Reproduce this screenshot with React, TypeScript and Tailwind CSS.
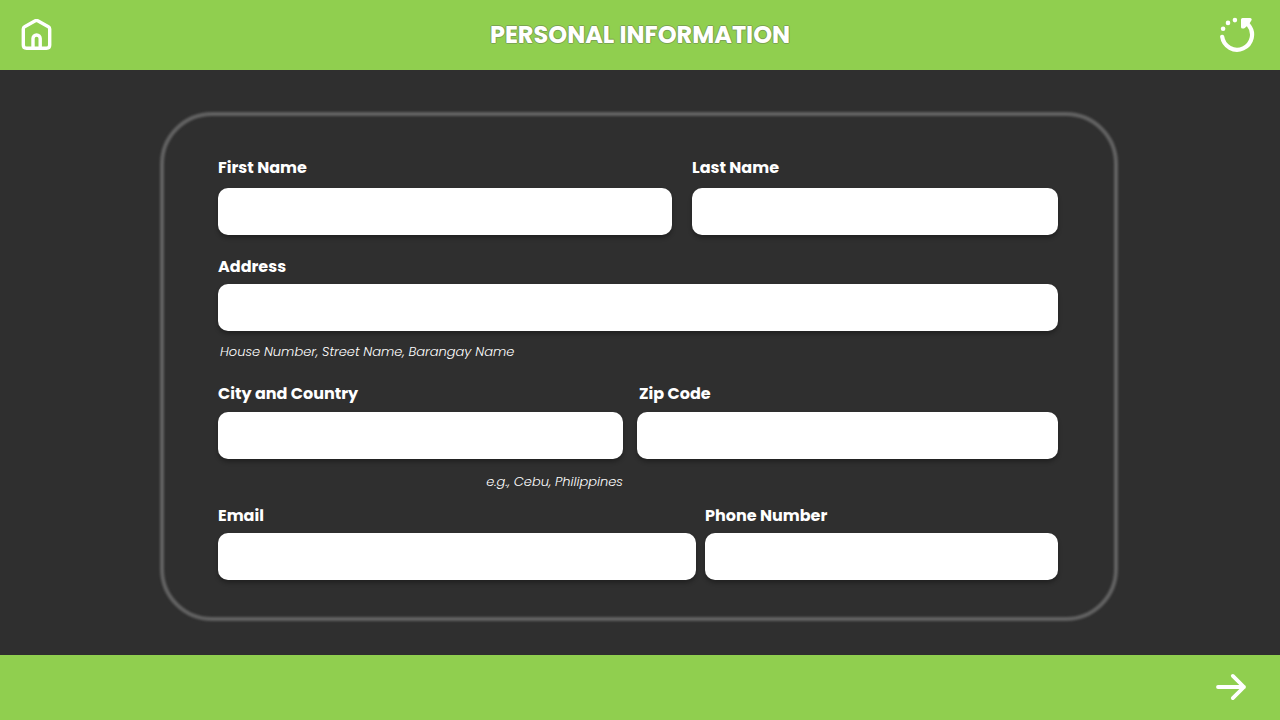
import type { ReactNode } from "react";

type FieldProps = {
  id: string;
  label: string;
  type?: string;
  hint?: string;
  gap?: string;
  labelClass?: string;
  hintClass?: string;
};

function Field({ id, label, type = "text", hint, gap = "gap-[5px]", labelClass = "", hintClass = "" }: FieldProps) {
  return (
    <div className="flex min-w-0 flex-col">
      <div className={`flex flex-col ${gap}`}>
        <label htmlFor={id} className={`text-base leading-6 font-bold ${labelClass}`}>
          {label}
        </label>
        <input
          id={id}
          type={type}
          aria-describedby={hint ? `${id}-hint` : undefined}
          className="h-[47px] w-full rounded-[10px] bg-white px-4 text-base text-neutral-800 shadow-[0_3px_4px_rgba(0,0,0,0.3)] outline-none focus:ring-2 focus:ring-[#90cf4f]"
        />
      </div>
      {hint && (
        <p id={`${id}-hint`} className={`text-[13px] leading-5 font-light italic ${hintClass}`}>
          {hint}
        </p>
      )}
    </div>
  );
}

function IconButton({ label, className = "", children }: { label: string; className?: string; children: ReactNode }) {
  return (
    <button type="button" aria-label={label} className={`shrink-0 cursor-pointer text-white ${className}`}>
      {children}
    </button>
  );
}

function HomeIcon() {
  return (
    <svg width="32" height="32" viewBox="0 0 32 32" fill="none" stroke="currentColor" strokeWidth="3.4" strokeLinejoin="round">
      <path d="M2.3 10Q2.3 8.4 3.6 7.7L14.3 1.8Q15.5 1.2 16.7 1.8L27.4 7.7Q28.7 8.4 28.7 10V26Q28.7 29.2 25.5 29.2H5.5Q2.3 29.2 2.3 26Z" />
      <path d="M12 29V19.6a3.6 3.6 0 0 1 7.2 0V29" />
    </svg>
  );
}

function ResetIcon() {
  return (
    <svg width="36" height="36" viewBox="0 0 36 36" fill="none" stroke="currentColor" strokeLinecap="round" strokeLinejoin="round">
      <path d="M3.2 19.8A15 15 0 1 0 29.5 8" strokeWidth="4.2" />
      <path d="M23.5 2.4h7.7l-2 3.4-4.4 4.2h-1.3Z" fill="currentColor" strokeWidth="3" />
      <g fill="currentColor" stroke="none">
        <circle cx="4.1" cy="11.8" r="2.3" />
        <circle cx="9" cy="5.9" r="2.3" />
        <circle cx="15.9" cy="3.1" r="2.3" />
      </g>
    </svg>
  );
}

function NextIcon() {
  return (
    <svg width="32" height="32" viewBox="0 0 32 32" fill="none" stroke="currentColor" strokeWidth="3.8" strokeLinecap="round" strokeLinejoin="round">
      <path d="M3 15h26M17.8 3.9L29 15 17.8 26.1" />
    </svg>
  );
}

export default function App() {
  return (
    <div className="flex min-h-screen flex-col bg-[#2f2f2f] font-['Poppins','Inter',sans-serif] text-white">
      <header className="grid h-[70px] grid-cols-[1fr_auto_1fr] items-center bg-[#90cf4f] px-[21px]">
        <IconButton label="Home" className="justify-self-start">
          <HomeIcon />
        </IconButton>
        <h1 className="text-2xl leading-8 font-bold [text-shadow:1px_0_0_#7ba352,-1px_0_0_#7ba352,0_1px_0_#7ba352,0_-1px_0_#7ba352]">
          PERSONAL INFORMATION
        </h1>
        <IconButton label="Reset form" className="mr-1 justify-self-end">
          <ResetIcon />
        </IconButton>
      </header>

      <main className="flex flex-1 flex-col justify-center pt-[42px] pr-[162px] pb-[34px] pl-40">
        <div className="relative">
          <div aria-hidden="true" className="pointer-events-none absolute inset-0 rounded-[52px] border-4 border-[#626262] blur-[1px]" />
          <form id="personal-information" className="relative flex flex-col pt-11 pr-[60px] pb-[41px] pl-[58px]">
            <div className="grid grid-cols-[454fr_366fr] gap-5">
              <Field id="first-name" label="First Name" gap="gap-2" />
              <Field id="last-name" label="Last Name" gap="gap-2" />
            </div>
            <div className="mt-5">
              <Field id="address" label="Address" hint="House Number, Street Name, Barangay Name" hintClass="mt-[11px] pl-0.5" />
            </div>
            <div className="mt-5 grid grid-cols-[405fr_421fr] gap-3.5">
              <Field id="city" label="City and Country" gap="gap-1.5" hint="e.g., Cebu, Philippines" hintClass="mt-[13px] text-right" />
              <Field id="zip" label="Zip Code" gap="gap-1.5" labelClass="pl-0.5" />
            </div>
            <div className="mt-3 grid grid-cols-[478fr_353fr] gap-[9px]">
              <Field id="email" label="Email" type="email" />
              <Field id="phone" label="Phone Number" type="tel" />
            </div>
          </form>
        </div>
      </main>

      <footer className="flex h-[65px] items-center justify-end bg-[#90cf4f] pr-[33px]">
        <IconButton label="Next">
          <NextIcon />
        </IconButton>
      </footer>
    </div>
  );
}
